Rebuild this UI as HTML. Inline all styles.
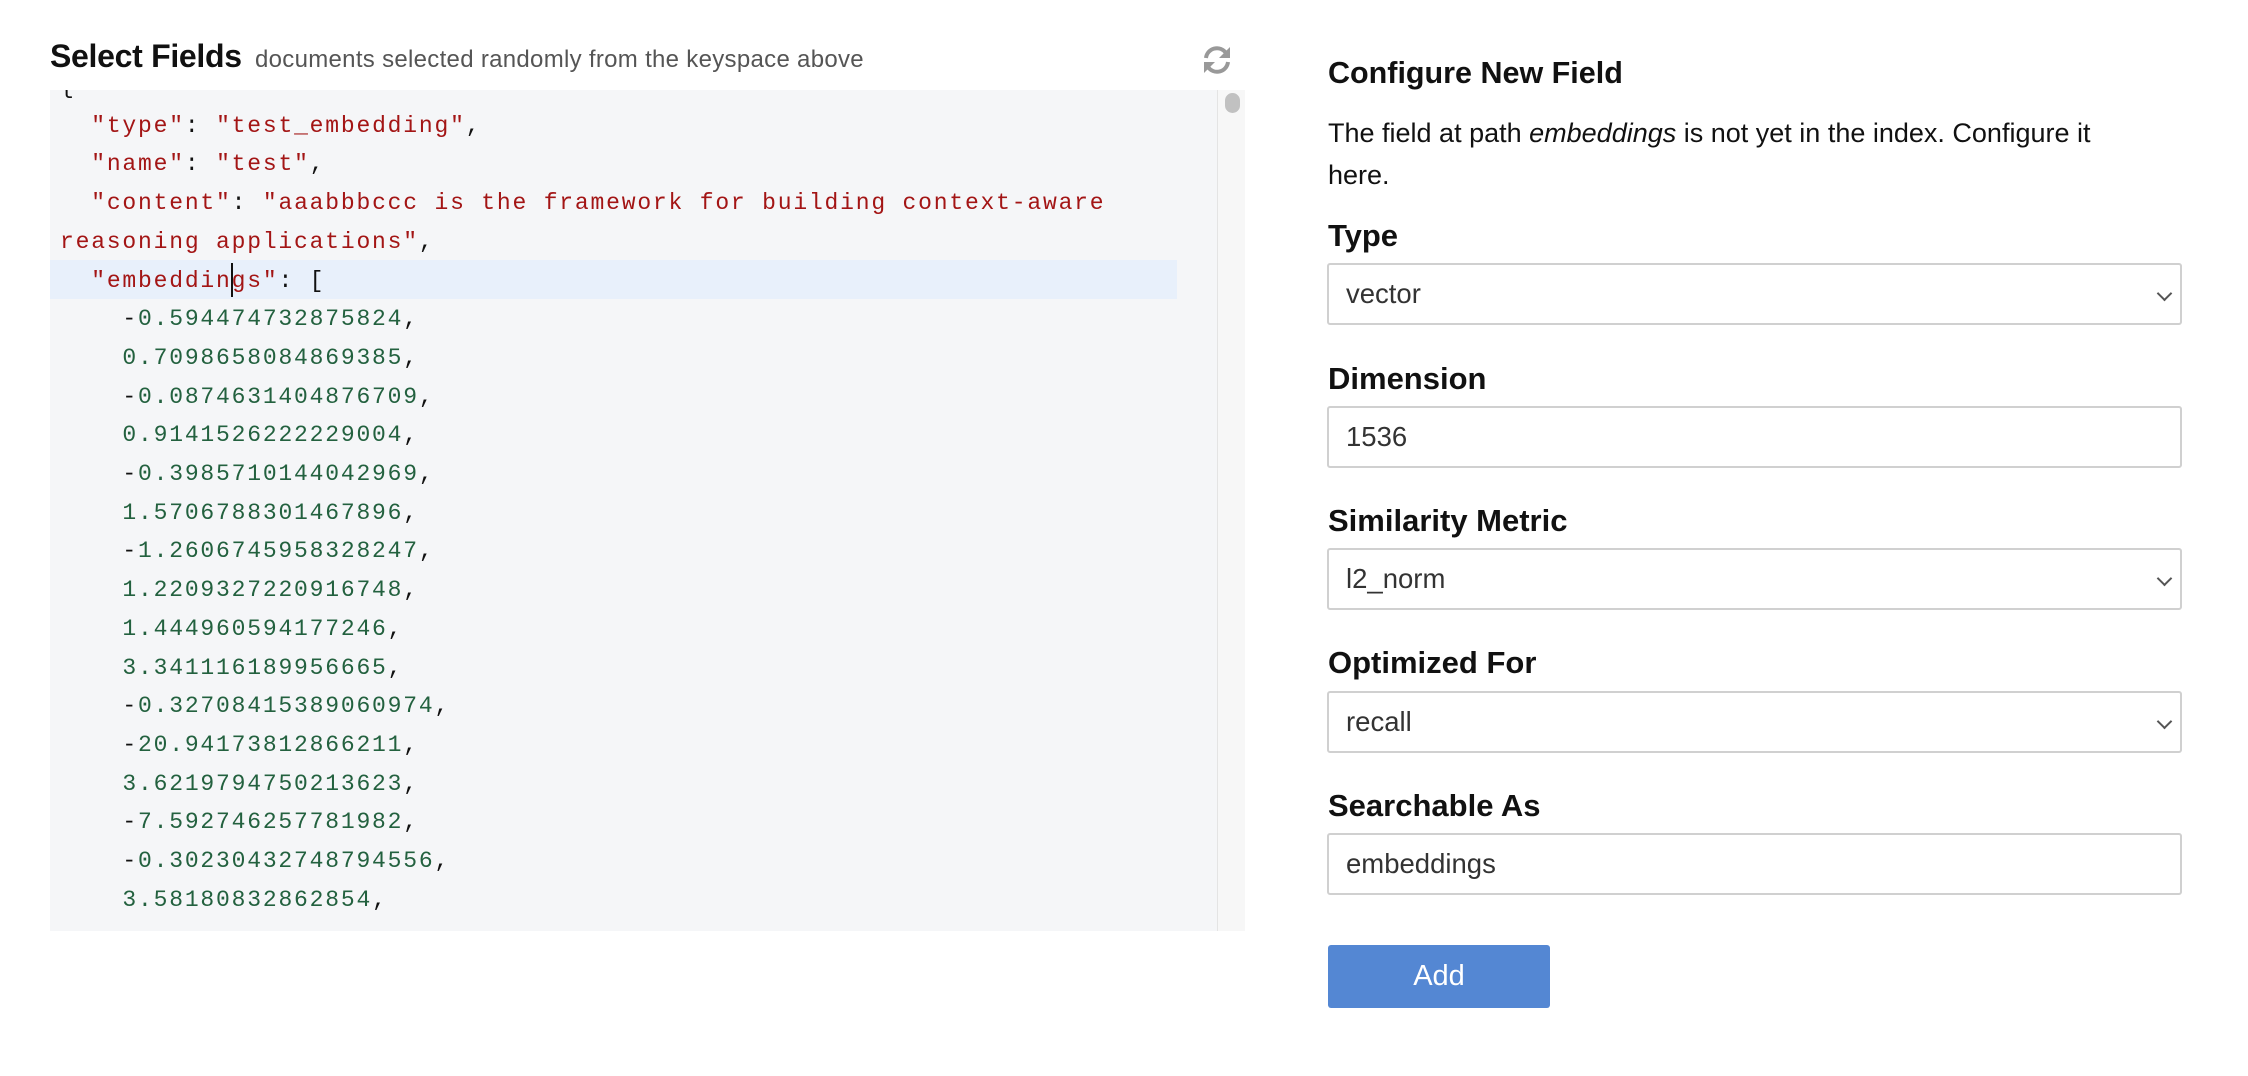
<!DOCTYPE html>
<html><head><meta charset="utf-8"><style>
*{box-sizing:border-box;margin:0;padding:0}
body{width:2248px;height:1076px;background:#fff;position:relative;overflow:hidden;font-family:"Liberation Sans",sans-serif;color:#111}
.abs{position:absolute;white-space:nowrap}
#title{left:50px;top:38px;font-size:32px;font-weight:bold;letter-spacing:-0.3px}
#sub{left:255px;top:46px;font-size:24px;color:#555;letter-spacing:0.3px}
#editor{left:50px;top:90px;width:1195px;height:841px;background:#f5f6f8;overflow:hidden}
#gutter{position:absolute;left:1167px;top:0;width:28px;height:100%;border-left:1px solid #e4e4e4;background:#f7f7f7}
#thumb{position:absolute;left:1175px;top:3px;width:15px;height:20px;border-radius:8px;background:#c1c1c1}
#hl{position:absolute;left:0;top:170px;width:1127px;height:39px;background:#e8f0fb}
#code{position:absolute;left:10px;top:-22px;font-family:"Liberation Mono",monospace;font-size:23px;letter-spacing:1.8px;line-height:38.7px;color:#111;white-space:pre}
.k{color:#a31515}.n{color:#23613f}
#cursor{position:absolute;left:181px;top:173px;width:2px;height:34px;background:#111}
.lbl{font-size:31px;font-weight:bold;left:1328px}
.box{position:absolute;left:1327px;width:855px;height:62px;border:2px solid #d0d0d0;border-radius:3px;font-size:27.5px;color:#333;padding-left:17px;line-height:58px}
.arr{position:absolute;right:10px;top:23px;width:11px;height:11px;border-right:2px solid #555;border-bottom:2px solid #555;transform:rotate(45deg)}
#btn{left:1328px;top:945px;width:222px;height:63px;background:#5487d3;border-radius:3px;color:#fff;font-size:29px;text-align:center;line-height:63px}
</style></head><body>
<div class="abs" id="title">Select Fields</div>
<div class="abs" id="sub">documents selected randomly from the keyspace above</div>
<svg class="abs" style="left:1201px;top:44px" width="32" height="32" viewBox="0 0 32 32"><g fill="none" stroke="#999" stroke-width="4"><path d="M5 14 A11 11 0 0 1 25 9"/><path d="M27 18 A11 11 0 0 1 7 23"/></g><path d="M29 3 L29 14 L18 14 Z" fill="#999"/><path d="M3 29 L3 18 L14 18 Z" fill="#999"/></svg>
<div class="abs" id="editor">
<div id="hl"></div>
<div id="gutter"></div><div id="thumb"></div>
<div id="code">{
  <span class="k">"type"</span>: <span class="k">"test_embedding"</span>,
  <span class="k">"name"</span>: <span class="k">"test"</span>,
  <span class="k">"content"</span>: <span class="k">"aaabbbccc is the framework for building context-aware</span>
<span class="k">reasoning applications"</span>,
  <span class="k">"embeddings"</span>: [
    -<span class="n">0.594474732875824</span>,
    <span class="n">0.7098658084869385</span>,
    -<span class="n">0.0874631404876709</span>,
    <span class="n">0.9141526222229004</span>,
    -<span class="n">0.3985710144042969</span>,
    <span class="n">1.5706788301467896</span>,
    -<span class="n">1.2606745958328247</span>,
    <span class="n">1.2209327220916748</span>,
    <span class="n">1.444960594177246</span>,
    <span class="n">3.341116189956665</span>,
    -<span class="n">0.32708415389060974</span>,
    -<span class="n">20.94173812866211</span>,
    <span class="n">3.6219794750213623</span>,
    -<span class="n">7.592746257781982</span>,
    -<span class="n">0.30230432748794556</span>,
    <span class="n">3.58180832862854</span>,
</div>
<div id="cursor"></div>
</div>

<div class="abs" style="left:1328px;top:56px;font-size:30.5px;font-weight:bold">Configure New Field</div>
<div class="abs" style="left:1328px;top:112px;font-size:27px;line-height:42px">The field at path <i>embeddings</i> is not yet in the index. Configure it<br>here.</div>
<div class="abs lbl" style="top:218px">Type</div>
<div class="box" style="top:263px">vector<div class="arr"></div></div>
<div class="abs lbl" style="top:361px">Dimension</div>
<div class="box" style="top:406px">1536</div>
<div class="abs lbl" style="top:503px">Similarity Metric</div>
<div class="box" style="top:548px">l2_norm<div class="arr"></div></div>
<div class="abs lbl" style="top:645px">Optimized For</div>
<div class="box" style="top:691px">recall<div class="arr"></div></div>
<div class="abs lbl" style="top:788px">Searchable As</div>
<div class="box" style="top:833px">embeddings</div>
<div class="abs" id="btn">Add</div>
</body></html>
